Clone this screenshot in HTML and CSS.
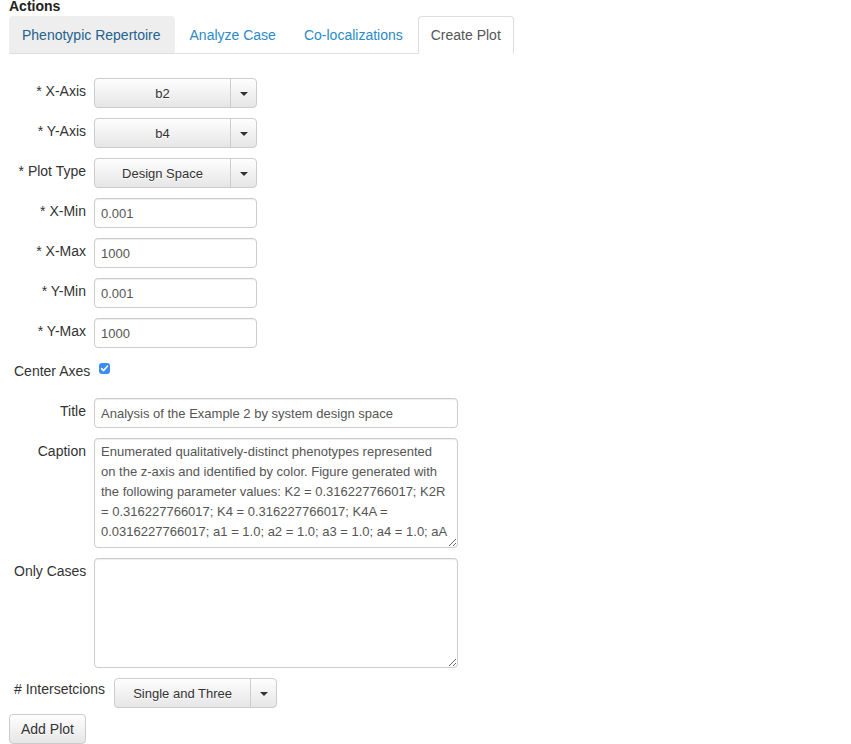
FILE: index.html
```html
<!DOCTYPE html>
<html>
<head>
<meta charset="utf-8">
<link rel="stylesheet" href="styles.css">
</head>
<body>
<div class="page">
  <div class="heading">Actions</div>
  <ul class="tabs">
    <li><a class="tab tab-hover">Phenotypic Repertoire</a></li>
    <li><a class="tab">Analyze Case</a></li>
    <li><a class="tab">Co-localizations</a></li>
    <li><a class="tab tab-active">Create Plot</a></li>
  </ul>
  <form class="form">
    <div class="row">
      <label class="label">* X-Axis</label>
      <div class="btn-group">
        <span class="btn-main">b2</span><span class="btn-caret"><span class="caret"></span></span>
      </div>
    </div>
    <div class="row">
      <label class="label">* Y-Axis</label>
      <div class="btn-group">
        <span class="btn-main">b4</span><span class="btn-caret"><span class="caret"></span></span>
      </div>
    </div>
    <div class="row">
      <label class="label">* Plot Type</label>
      <div class="btn-group">
        <span class="btn-main">Design Space</span><span class="btn-caret"><span class="caret"></span></span>
      </div>
    </div>
    <div class="row">
      <label class="label">* X-Min</label>
      <input class="input input-short" type="text" value="0.001">
    </div>
    <div class="row">
      <label class="label">* X-Max</label>
      <input class="input input-short" type="text" value="1000">
    </div>
    <div class="row">
      <label class="label">* Y-Min</label>
      <input class="input input-short" type="text" value="0.001">
    </div>
    <div class="row">
      <label class="label">* Y-Max</label>
      <input class="input input-short" type="text" value="1000">
    </div>
    <div class="row row-inline">
      <span class="inline-label">Center Axes</span>
      <span class="checkbox"><svg width="11" height="11" viewBox="0 0 11 11"><path d="M2.6 5.6 L4.6 7.6 L8.4 3.2" fill="none" stroke="#fff" stroke-width="1.6" stroke-linecap="round" stroke-linejoin="round"/></svg></span>
    </div>
    <div class="row">
      <label class="label">Title</label>
      <input class="input input-long" type="text" value="Analysis of the Example 2 by system design space">
    </div>
    <div class="row">
      <label class="label">Caption</label>
      <textarea class="textarea">Enumerated qualitatively-distinct phenotypes represented on the z-axis and identified by color. Figure generated with the following parameter values: K2 = 0.316227766017; K2R = 0.316227766017; K4 = 0.316227766017; K4A = 0.0316227766017; a1 = 1.0; a2 = 1.0; a3 = 1.0; a4 = 1.0; aA</textarea>
    </div>
    <div class="row">
      <label class="label">Only Cases</label>
      <textarea class="textarea"></textarea>
    </div>
    <div class="row row-inline row-inter">
      <span class="inline-label inter-label"># Intersetcions</span>
      <div class="btn-group btn-group-inter">
        <span class="btn-main">Single and Three</span><span class="btn-caret"><span class="caret"></span></span>
      </div>
    </div>
    <div class="row-submit">
      <button type="button" class="btn-submit">Add Plot</button>
    </div>
  </form>
</div>
</body>
</html>
```

FILE: styles.css
```css
html, body {
  margin: 0;
  padding: 0;
  background: #fff;
}
body {
  font-family: "Liberation Sans", Arial, sans-serif;
  font-size: 14px;
  color: #333;
}
.page {
  padding: 0 9px;
}
.heading {
  font-weight: bold;
  font-size: 14px;
  line-height: 16px;
  margin-top: -2px;
  margin-bottom: 2px;
  color: #222;
}
.tabs {
  list-style: none;
  margin: 0;
  padding: 0;
  display: inline-flex;
  border-bottom: 1px solid #ddd;
}
.tabs li {
  margin-right: 2px;
  margin-bottom: -1px;
}
.tabs li:last-child {
  margin-right: 0;
}
.tab {
  display: block;
  border: 1px solid transparent;
  border-radius: 4px 4px 0 0;
  padding: 9px 12px 9px 12px;
  line-height: 18px;
  font-size: 14px;
  color: #2a8ac9;
  white-space: nowrap;
}
.tab-hover {
  background: #eee;
  border-color: #eee #eee #ddd;
  color: #24628f;
  padding-right: 13px;
}
.tab-active {
  background: #fff;
  border-color: #ddd #ddd transparent;
  color: #555;
}
.form {
  margin-top: 24px;
  display: flex;
  flex-direction: column;
  gap: 10px;
}
.row {
  display: flex;
  align-items: flex-start;
  gap: 8px;
}
.label {
  width: 72px;
  margin-left: 5px;
  text-align: right;
  padding-top: 3px;
  line-height: 20px;
  font-size: 14px;
  color: #333;
  white-space: nowrap;
}
.btn-group {
  display: flex;
  width: 163px;
  height: 30px;
  box-sizing: border-box;
  border: 1px solid #ccc;
  border-radius: 4px;
  background: linear-gradient(#fefefe, #e6e6e6);
  overflow: hidden;
}
.btn-main {
  flex: 1;
  display: flex;
  align-items: center;
  justify-content: center;
  font-size: 13px;
  color: #333;
  text-shadow: 0 1px 0 #fff;
  white-space: nowrap;
}
.btn-caret {
  width: 25px;
  border-left: 1px solid #ccc;
  display: flex;
  align-items: center;
  justify-content: center;
}
.caret {
  width: 0;
  height: 0;
  border-top: 4px solid #333;
  border-left: 4px solid transparent;
  border-right: 4px solid transparent;
  margin-top: 1px;
}
.input {
  box-sizing: border-box;
  height: 30px;
  border: 1px solid #ccc;
  border-radius: 4px;
  padding: 0 6px;
  font-family: "Liberation Sans", Arial, sans-serif;
  font-size: 13px;
  color: #555;
  box-shadow: inset 0 1px 1px rgba(0,0,0,0.075);
  margin: 0;
  outline: none;
}
.input-short {
  width: 163px;
}
.input-long {
  width: 364px;
}
.textarea {
  box-sizing: border-box;
  width: 364px;
  height: 110px;
  border: 1px solid #ccc;
  border-radius: 4px;
  padding: 3px 8px 3px 6px;
  font-family: "Liberation Sans", Arial, sans-serif;
  font-size: 13px;
  line-height: 20px;
  color: #555;
  box-shadow: inset 0 1px 1px rgba(0,0,0,0.075);
  margin: 0;
  overflow: hidden;
  resize: both;
  outline: none;
}
.row-inline {
  align-items: flex-start;
  height: 30px;
  padding-left: 5px;
  gap: 9px;
}
.inline-label {
  line-height: 20px;
  font-size: 14px;
  padding-top: 3px;
  white-space: nowrap;
}
.checkbox {
  width: 11px;
  height: 11px;
  border-radius: 3px;
  background: #3b8ef0;
  display: flex;
  margin-top: 5px;
}
.checkbox svg {
  display: block;
}
.inter-label {
  padding-top: 1px;
}
.row-submit {
  margin-top: -4px;
}
.btn-submit {
  box-sizing: border-box;
  height: 30px;
  border: 1px solid #ccc;
  border-radius: 4px;
  background: linear-gradient(#fefefe, #e6e6e6);
  font-family: "Liberation Sans", Arial, sans-serif;
  font-size: 14px;
  color: #333;
  padding: 0 11px;
  text-shadow: 0 1px 0 #fff;
  white-space: nowrap;
}
```
